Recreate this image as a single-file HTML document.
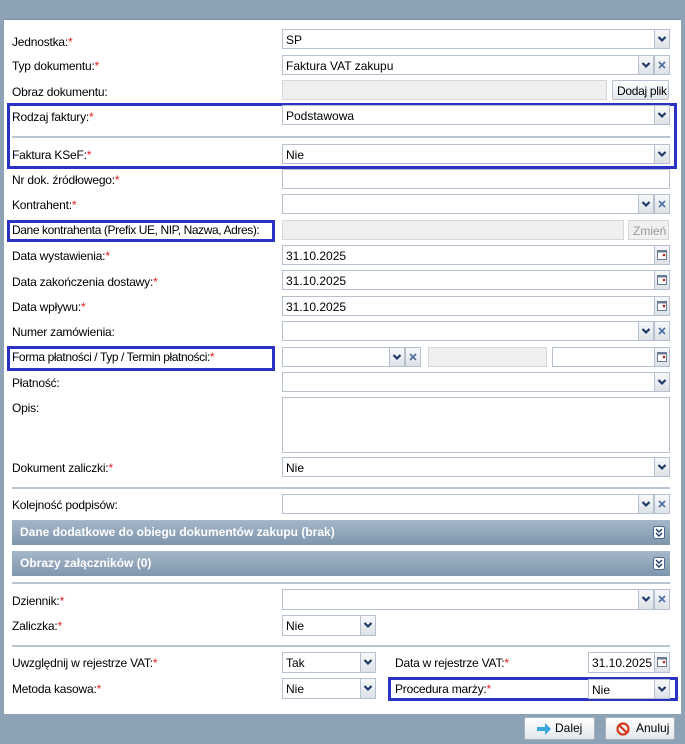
<!DOCTYPE html><html><head><meta charset="utf-8"><style>
body{margin:0;width:685px;height:744px;background:#8ea2b6;position:relative;overflow:hidden;font:12px "Liberation Sans",sans-serif;color:#000}
.pn{position:absolute;left:4px;top:19px;width:677px;height:694px;background:#fff;border-top:1px solid #7d91a6}
.l{position:absolute;left:12px;white-space:nowrap;margin-top:0px;letter-spacing:-0.2px}
.l b{color:#e02020;font-weight:normal}
.i{position:absolute;height:20px;border:1px solid #b7c0cf;background:#fff;box-sizing:border-box;padding-left:3px;line-height:20px;white-space:nowrap}
.g{background:#f0f0f0;border-color:#d4d8de}
.b{position:absolute;width:16px;height:20px;box-sizing:border-box;border:1px solid #b7c0cf;background:linear-gradient(#f7f8fa,#dde2e8)}
.b svg{position:absolute;left:2px;top:4px}
.hr{position:absolute;left:12px;width:658px;height:2px;background:#b9c5d3}
.bx{position:absolute;border:3px solid #2b31c0;box-sizing:border-box}
.hd{position:absolute;left:12px;width:658px;height:25px;background:linear-gradient(#a5b7c9,#7f96ad);color:#fff;font-weight:bold;line-height:25px;padding-left:8px;box-sizing:border-box}
.hd svg{position:absolute;right:5px;top:6px}
.bt{position:absolute;height:23px;top:717px;border:1px solid #a7b2c0;background:linear-gradient(#fff,#e3e7ec);box-sizing:border-box;line-height:21px;padding-left:30px;border-radius:2px}
</style></head><body>
<div class="pn"></div>

<div class="l" style="top:35px">Jednostka:<b>*</b></div>
<div class="i" style="left:282px;top:29px;width:373px">SP</div><div class="b" style="left:654px;top:29px"><svg width="10" height="10"><path d="M1.5 3l3.5 3.5 3.5-3.5" stroke="#1f3868" stroke-width="2.2" fill="none"/></svg></div>

<div class="l" style="top:59px">Typ dokumentu:<b>*</b></div>
<div class="i" style="left:282px;top:55px;width:357px">Faktura VAT zakupu</div><div class="b" style="left:638px;top:55px"><svg width="10" height="10"><path d="M1.5 3l3.5 3.5 3.5-3.5" stroke="#1f3868" stroke-width="2.2" fill="none"/></svg></div><div class="b" style="left:654px;top:55px"><svg width="10" height="10"><path d="M2 2l6 6M8 2l-6 6" stroke="#4a6fa0" stroke-width="1.6"/></svg></div>

<div class="l" style="top:85px">Obraz dokumentu:</div>
<div class="i g" style="left:282px;top:80px;width:325px"></div>
<div class="i" style="left:612px;top:80px;width:57px;background:linear-gradient(#fff,#e3e7ec);padding-left:4px;border-radius:2px;letter-spacing:-0.3px">Dodaj plik</div>

<div class="bx" style="left:7px;top:103px;width:670px;height:66px"></div>
<div class="l" style="top:110px">Rodzaj faktury:<b>*</b></div>
<div class="i" style="left:282px;top:105px;width:373px">Podstawowa</div><div class="b" style="left:654px;top:105px"><svg width="10" height="10"><path d="M1.5 3l3.5 3.5 3.5-3.5" stroke="#1f3868" stroke-width="2.2" fill="none"/></svg></div>
<div class="hr" style="top:136px"></div>
<div class="l" style="top:148px">Faktura KSeF:<b>*</b></div>
<div class="i" style="left:282px;top:144px;width:373px">Nie</div><div class="b" style="left:654px;top:144px"><svg width="10" height="10"><path d="M1.5 3l3.5 3.5 3.5-3.5" stroke="#1f3868" stroke-width="2.2" fill="none"/></svg></div>

<div class="l" style="top:173px">Nr dok. źródłowego:<b>*</b></div>
<div class="i" style="left:282px;top:169px;width:388px"></div>

<div class="l" style="top:198px">Kontrahent:<b>*</b></div>
<div class="i" style="left:282px;top:194px;width:357px"></div><div class="b" style="left:638px;top:194px"><svg width="10" height="10"><path d="M1.5 3l3.5 3.5 3.5-3.5" stroke="#1f3868" stroke-width="2.2" fill="none"/></svg></div><div class="b" style="left:654px;top:194px"><svg width="10" height="10"><path d="M2 2l6 6M8 2l-6 6" stroke="#4a6fa0" stroke-width="1.6"/></svg></div>

<div class="bx" style="left:7px;top:220px;width:268px;height:22px"></div>
<div class="l" style="top:223px;letter-spacing:-0.4px">Dane kontrahenta (Prefix UE, NIP, Nazwa, Adres):</div>
<div class="i g" style="left:282px;top:220px;width:342px"></div>
<div class="i g" style="left:628px;top:220px;width:41px;color:#999;padding-left:4px">Zmień</div>

<div class="l" style="top:249px">Data wystawienia:<b>*</b></div>
<div class="i" style="left:282px;top:245px;width:373px">31.10.2025</div><div class="b" style="left:654px;top:245px"><svg width="11" height="11"><rect x="0.5" y="0.5" width="9" height="9" fill="#fff" stroke="#6a7a90"/><rect x="0.5" y="0.5" width="9" height="2" fill="#6a7a90"/><circle cx="7" cy="5" r="1.3" fill="#c02020"/></svg></div>
<div class="l" style="top:275px">Data zakończenia dostawy:<b>*</b></div>
<div class="i" style="left:282px;top:270px;width:373px">31.10.2025</div><div class="b" style="left:654px;top:270px"><svg width="11" height="11"><rect x="0.5" y="0.5" width="9" height="9" fill="#fff" stroke="#6a7a90"/><rect x="0.5" y="0.5" width="9" height="2" fill="#6a7a90"/><circle cx="7" cy="5" r="1.3" fill="#c02020"/></svg></div>
<div class="l" style="top:300px">Data wpływu:<b>*</b></div>
<div class="i" style="left:282px;top:296px;width:373px">31.10.2025</div><div class="b" style="left:654px;top:296px"><svg width="11" height="11"><rect x="0.5" y="0.5" width="9" height="9" fill="#fff" stroke="#6a7a90"/><rect x="0.5" y="0.5" width="9" height="2" fill="#6a7a90"/><circle cx="7" cy="5" r="1.3" fill="#c02020"/></svg></div>

<div class="l" style="top:325px">Numer zamówienia:</div>
<div class="i" style="left:282px;top:321px;width:357px"></div><div class="b" style="left:638px;top:321px"><svg width="10" height="10"><path d="M1.5 3l3.5 3.5 3.5-3.5" stroke="#1f3868" stroke-width="2.2" fill="none"/></svg></div><div class="b" style="left:654px;top:321px"><svg width="10" height="10"><path d="M2 2l6 6M8 2l-6 6" stroke="#4a6fa0" stroke-width="1.6"/></svg></div>

<div class="bx" style="left:7px;top:346px;width:268px;height:25px"></div>
<div class="l" style="top:350px;letter-spacing:-0.4px">Forma płatności / Typ / Termin płatności:<b>*</b></div>
<div class="i" style="left:282px;top:347px;width:108px"></div><div class="b" style="left:389px;top:347px"><svg width="10" height="10"><path d="M1.5 3l3.5 3.5 3.5-3.5" stroke="#1f3868" stroke-width="2.2" fill="none"/></svg></div><div class="b" style="left:405px;top:347px"><svg width="10" height="10"><path d="M2 2l6 6M8 2l-6 6" stroke="#4a6fa0" stroke-width="1.6"/></svg></div>
<div class="i g" style="left:428px;top:347px;width:119px"></div>
<div class="i" style="left:552px;top:347px;width:103px"></div><div class="b" style="left:654px;top:347px"><svg width="11" height="11"><rect x="0.5" y="0.5" width="9" height="9" fill="#fff" stroke="#6a7a90"/><rect x="0.5" y="0.5" width="9" height="2" fill="#6a7a90"/><circle cx="7" cy="5" r="1.3" fill="#c02020"/></svg></div>

<div class="l" style="top:376px">Płatność:</div>
<div class="i" style="left:282px;top:372px;width:373px"></div><div class="b" style="left:654px;top:372px"><svg width="10" height="10"><path d="M1.5 3l3.5 3.5 3.5-3.5" stroke="#1f3868" stroke-width="2.2" fill="none"/></svg></div>

<div class="l" style="top:401px">Opis:</div>
<div class="i" style="left:282px;top:397px;width:388px;height:56px"></div>

<div class="l" style="top:461px">Dokument zaliczki:<b>*</b></div>
<div class="i" style="left:282px;top:457px;width:373px">Nie</div><div class="b" style="left:654px;top:457px"><svg width="10" height="10"><path d="M1.5 3l3.5 3.5 3.5-3.5" stroke="#1f3868" stroke-width="2.2" fill="none"/></svg></div>

<div class="hr" style="top:487px"></div>
<div class="l" style="top:498px">Kolejność podpisów:</div>
<div class="i" style="left:282px;top:494px;width:357px"></div><div class="b" style="left:638px;top:494px"><svg width="10" height="10"><path d="M1.5 3l3.5 3.5 3.5-3.5" stroke="#1f3868" stroke-width="2.2" fill="none"/></svg></div><div class="b" style="left:654px;top:494px"><svg width="10" height="10"><path d="M2 2l6 6M8 2l-6 6" stroke="#4a6fa0" stroke-width="1.6"/></svg></div>

<div class="hd" style="top:520px">Dane dodatkowe do obiegu dokumentów zakupu (brak)<svg width="12" height="13"><rect x="0.5" y="0.5" width="11" height="12" rx="2" fill="#fff" stroke="#4a6a90"/><path d="M3 3l3 3 3-3M3 7l3 3 3-3" stroke="#1f3868" stroke-width="1.4" fill="none"/></svg></div>
<div class="hd" style="top:551px">Obrazy załączników (0)<svg width="12" height="13"><rect x="0.5" y="0.5" width="11" height="12" rx="2" fill="#fff" stroke="#4a6a90"/><path d="M3 3l3 3 3-3M3 7l3 3 3-3" stroke="#1f3868" stroke-width="1.4" fill="none"/></svg></div>

<div class="hr" style="top:582px"></div>
<div class="l" style="top:594px">Dziennik:<b>*</b></div>
<div class="i" style="left:282px;top:589px;width:357px;height:21px"></div><div class="b" style="left:638px;top:589px;height:21px"><svg width="10" height="10"><path d="M1.5 3l3.5 3.5 3.5-3.5" stroke="#1f3868" stroke-width="2.2" fill="none"/></svg></div><div class="b" style="left:654px;top:589px;height:21px"><svg width="10" height="10"><path d="M2 2l6 6M8 2l-6 6" stroke="#4a6fa0" stroke-width="1.6"/></svg></div>

<div class="l" style="top:619px">Zaliczka:<b>*</b></div>
<div class="i" style="left:282px;top:615px;width:79px;height:21px">Nie</div><div class="b" style="left:360px;top:615px;height:21px"><svg width="10" height="10"><path d="M1.5 3l3.5 3.5 3.5-3.5" stroke="#1f3868" stroke-width="2.2" fill="none"/></svg></div>

<div class="hr" style="top:645px"></div>
<div class="l" style="top:656px">Uwzględnij w rejestrze VAT:<b>*</b></div>
<div class="i" style="left:282px;top:652px;width:79px;height:21px">Tak</div><div class="b" style="left:360px;top:652px;height:21px"><svg width="10" height="10"><path d="M1.5 3l3.5 3.5 3.5-3.5" stroke="#1f3868" stroke-width="2.2" fill="none"/></svg></div>
<div class="l" style="left:395px;top:656px">Data w rejestrze VAT:<b>*</b></div>
<div class="i" style="left:588px;top:652px;width:67px;height:21px">31.10.2025</div><div class="b" style="left:654px;top:652px;height:21px"><svg width="11" height="11"><rect x="0.5" y="0.5" width="9" height="9" fill="#fff" stroke="#6a7a90"/><rect x="0.5" y="0.5" width="9" height="2" fill="#6a7a90"/><circle cx="7" cy="5" r="1.3" fill="#c02020"/></svg></div>

<div class="l" style="top:682px">Metoda kasowa:<b>*</b></div>
<div class="i" style="left:282px;top:678px;width:79px;height:21px">Nie</div><div class="b" style="left:360px;top:678px;height:21px"><svg width="10" height="10"><path d="M1.5 3l3.5 3.5 3.5-3.5" stroke="#1f3868" stroke-width="2.2" fill="none"/></svg></div>
<div class="bx" style="left:388px;top:677px;width:290px;height:24px"></div>
<div class="l" style="left:395px;top:682px">Procedura marży:<b>*</b></div>
<div class="i" style="left:588px;top:679px;width:67px;height:20px">Nie</div><div class="b" style="left:654px;top:679px"><svg width="10" height="10"><path d="M1.5 3l3.5 3.5 3.5-3.5" stroke="#1f3868" stroke-width="2.2" fill="none"/></svg></div>

<div class="bt" style="left:524px;width:71px"><svg style="position:absolute;left:11px;top:5px" width="16" height="12" viewBox="0 0 16 12"><path d="M1 4h8V0l6 6-6 6V8H1z" fill="#3aa8e0"/></svg>Dalej</div>
<div class="bt" style="left:605px;width:70px"><svg style="position:absolute;left:10px;top:4px" width="14" height="14" viewBox="0 0 14 14"><circle cx="7" cy="7" r="5.5" fill="none" stroke="#d63a1a" stroke-width="2.2"/><path d="M3 3l8 8" stroke="#d63a1a" stroke-width="2.2"/></svg>Anuluj</div>
</body></html>
